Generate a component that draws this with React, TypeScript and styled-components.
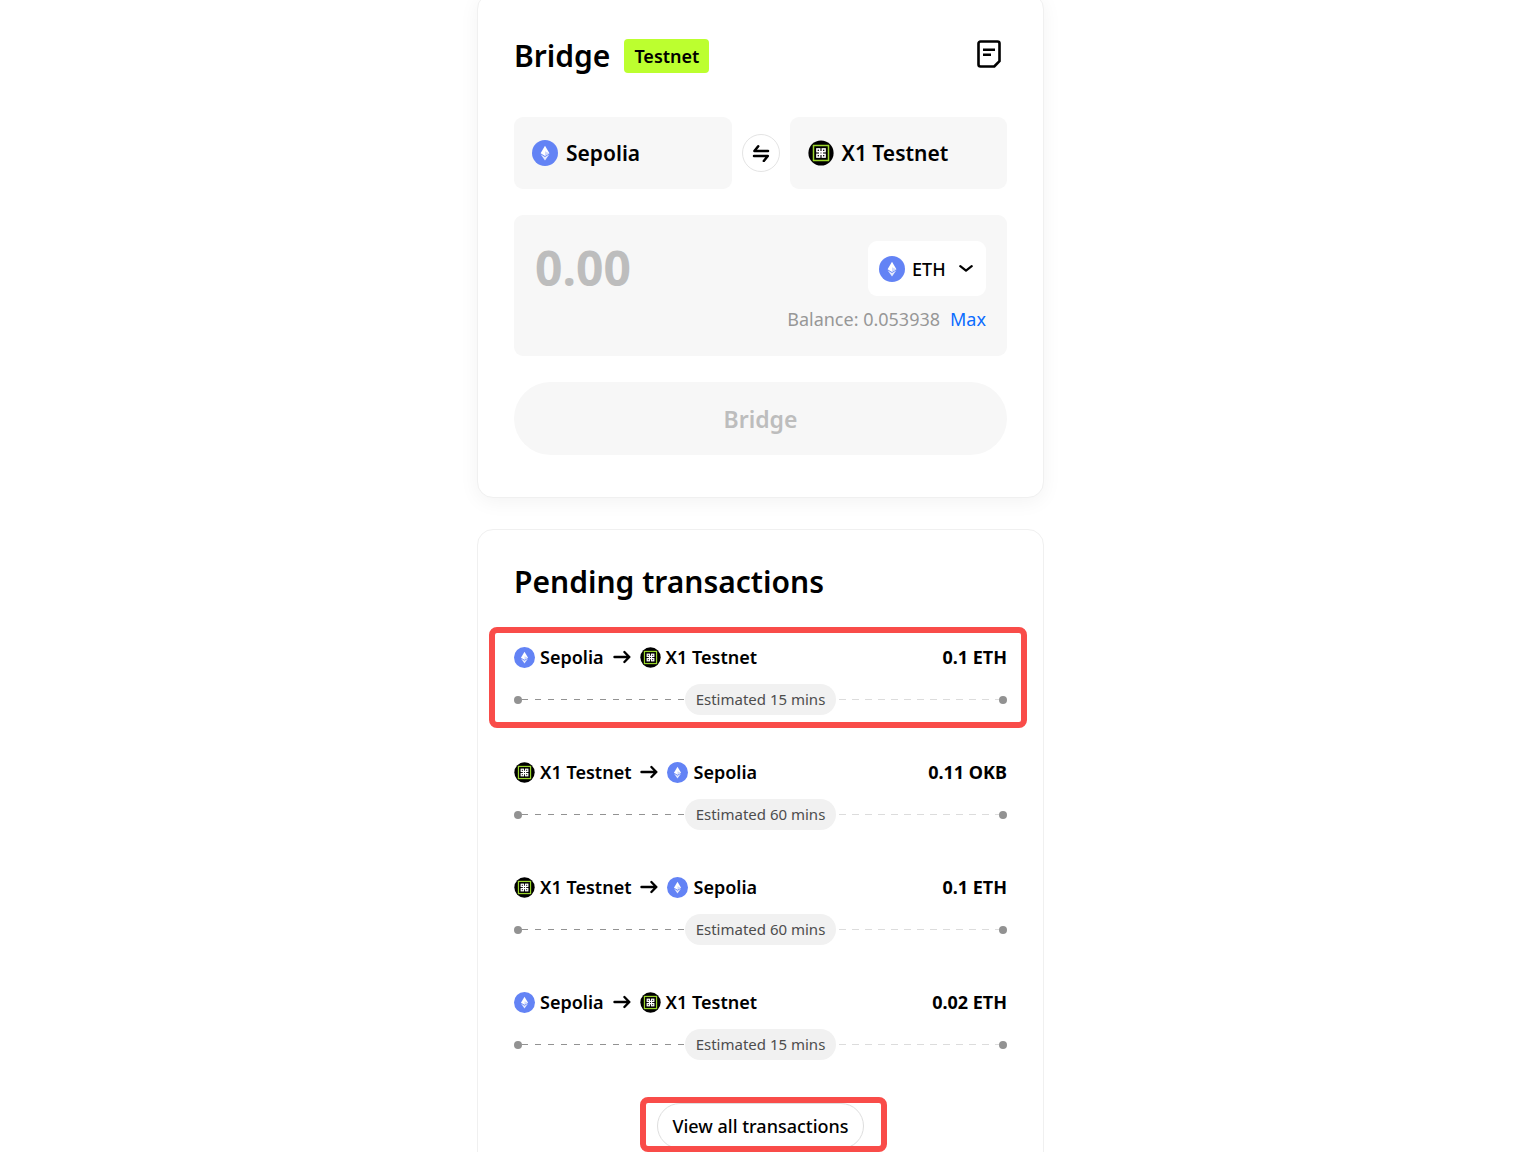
import React, { useState } from 'react';
import styled, { createGlobalStyle } from 'styled-components';

const GlobalStyle = createGlobalStyle`
  *, *::before, *::after { box-sizing: border-box; }
  html, body { margin: 0; background: #fff; }
  body { overflow: hidden; }
  body, button, input, select {
    font-family: "Noto Sans", "Open Sans", sans-serif;
    color: #000;
  }
  button { border: 0; padding: 0; background: none; cursor: pointer; }
  h1, h2, p, ul { margin: 0; padding: 0; }
`;

const Page = styled.main`
  height: 100vh;
  overflow: hidden;
  padding-right: 15px;
`;

const Column = styled.div`
  display: flex;
  flex-direction: column;
  gap: 31px;
  width: 100%;
  max-width: 567px;
  margin: -7px auto 0;
`;

const Card = styled.section<{ $raised?: boolean }>`
  padding: ${(p) => (p.$raised ? '36px 36px 42px' : '32px 36px 48px')};
  border: 1px solid #f0f0f0;
  border-radius: 16px;
  background: #fff;
  box-shadow: ${(p) => (p.$raised ? '0 4px 20px rgba(0, 0, 0, 0.05)' : 'none')};
`;

const Header = styled.header`
  display: flex;
  align-items: center;
  gap: 14px;
  height: 52px;
  margin-bottom: 35px;
`;

const Title = styled.h1`
  font-size: 30px;
  font-weight: 600;
  line-height: 40px;
`;

const Badge = styled.span`
  padding: 0 10px;
  border-radius: 4px;
  background: #bcff2f;
  font-size: 18px;
  font-weight: 600;
  line-height: 34px;
`;

const HistoryButton = styled.button`
  display: grid;
  place-items: center;
  align-self: flex-start;
  width: 36px;
  height: 48px;
  margin-left: auto;
`;

const Form = styled.form`
  display: flex;
  flex-direction: column;
  gap: 26px;
`;

const Route = styled.div`
  display: grid;
  grid-template-columns: 1fr 38px 1fr;
  align-items: center;
  gap: 10px;
`;

const ChainBox = styled.div`
  display: flex;
  align-items: center;
  gap: 8px;
  height: 72px;
  padding: 0 18px;
  border-radius: 9px;
  background: #f7f7f7;
  font-size: 21px;
  font-weight: 600;
`;

const SwapButton = styled.button`
  display: grid;
  place-items: center;
  width: 38px;
  height: 38px;
  border: 1px solid #e4e4e4;
  border-radius: 50%;
  background: #fff;
`;

const AmountPanel = styled.div`
  display: flex;
  flex-direction: column;
  gap: 11px;
  padding: 26px 21px 25px;
  border-radius: 9px;
  background: #f7f7f7;
`;

const AmountRow = styled.div`
  display: flex;
  align-items: flex-start;
  justify-content: space-between;
  gap: 16px;
`;

const AmountInput = styled.input`
  flex: 1;
  min-width: 0;
  height: 52px;
  padding: 0;
  border: 0;
  outline: 0;
  background: transparent;
  font-size: 48px;
  font-weight: 700;
  &::placeholder { color: #bdbdbd; opacity: 1; }
`;

const TokenPicker = styled.label`
  display: flex;
  align-items: center;
  gap: 7px;
  height: 55px;
  padding: 0 13px 0 11px;
  border-radius: 9px;
  background: #fff;
`;

const TokenSelect = styled.select`
  width: 40px;
  padding: 0;
  border: 0;
  outline: 0;
  appearance: none;
  background: transparent;
  font-size: 18px;
  font-weight: 500;
`;

const BalanceRow = styled.p`
  display: flex;
  justify-content: flex-end;
  gap: 10px;
  color: #979797;
  font-size: 18px;
  line-height: 24px;
`;

const MaxButton = styled.button`
  color: #0b6cff;
  font-size: 18px;
  line-height: 24px;
`;

const SubmitButton = styled.button`
  height: 73px;
  border-radius: 37px;
  background: #f7f7f7;
  color: #bdbdbd;
  font-size: 23px;
  font-weight: 600;
`;

const TransactionList = styled.ul`
  display: flex;
  flex-direction: column;
  gap: 43px;
  margin: 41px 0 43px;
  list-style: none;
`;

const Transaction = styled.li`
  position: relative;
  display: flex;
  flex-direction: column;
  gap: 13px;
`;

const Summary = styled.div`
  display: flex;
  align-items: center;
  gap: 9px;
  height: 28px;
  font-size: 18px;
  font-weight: 600;
`;

const Chain = styled.span`
  display: flex;
  align-items: center;
  gap: 5px;
`;

const Total = styled.span`
  margin-left: auto;
  font-weight: 700;
`;

const Progress = styled.div`
  display: flex;
  align-items: center;
`;

const Dot = styled.span`
  width: 8px;
  height: 8px;
  border-radius: 50%;
  background: #929292;
`;

const Dashes = styled.span<{ $done?: boolean }>`
  flex: 1;
  height: 1px;
  background: ${(p) =>
    p.$done
      ? 'repeating-linear-gradient(to right, #929292 0 6px, transparent 6px 13px)'
      : 'repeating-linear-gradient(to right, transparent 0 3px, #dcdcdc 3px 10px, transparent 10px 13px)'};
`;

const Estimate = styled.span`
  width: 151px;
  border-radius: 16px;
  background: #f1f1f1;
  color: #4d4d4d;
  font-size: 15px;
  line-height: 31px;
  text-align: center;
`;

const Footer = styled.div`
  position: relative;
  width: fit-content;
  margin: 0 auto;
`;

const ViewAllButton = styled.button`
  display: block;
  height: 46px;
  padding: 0 14px;
  border: 1px solid #dedede;
  border-radius: 23px;
  font-size: 18px;
  font-weight: 500;
`;

const Highlight = styled.span<{ $inset: string }>`
  position: absolute;
  inset: ${(p) => p.$inset};
  border: 6px solid #f94c49;
  border-radius: 8px;
  pointer-events: none;
`;

type Network = 'Sepolia' | 'X1 Testnet';

const EthIcon = ({ size }: { size: number }) => (
  <svg width={size} height={size} viewBox="0 0 26 26" aria-hidden="true">
    <circle cx="13" cy="13" r="13" fill="#6383f5" />
    <path d="M13 5.8 8.6 13.3 13 15.9l4.4-2.6z" fill="#fff" />
    <path d="M13 11.3v4.6l4.4-2.6z" fill="#cfd8fb" />
    <path d="m8.6 14.3 4.4 2.6 4.4-2.6L13 20.4z" fill="#e4e9fd" />
  </svg>
);

const X1Icon = ({ size }: { size: number }) => (
  <svg width={size} height={size} viewBox="0 0 26 26" aria-hidden="true">
    <circle cx="13" cy="13" r="12.6" fill="#000" />
    <rect x="5.5" y="5.5" width="15" height="15" fill="none" stroke="#9bd62b" strokeWidth="1.5" />
    <g fill="none" stroke="#fff" strokeWidth="1.5">
      <rect x="8.9" y="8.9" width="2.8" height="2.8" />
      <rect x="14.3" y="8.9" width="2.8" height="2.8" />
      <rect x="8.9" y="14.3" width="2.8" height="2.8" />
      <rect x="14.3" y="14.3" width="2.8" height="2.8" />
      <path d="M11 11.7h4M11 14.3h4M11.7 11v4M14.3 11v4" />
    </g>
  </svg>
);

const NetworkIcon = ({ network, size }: { network: Network; size: number }) =>
  network === 'Sepolia' ? <EthIcon size={size} /> : <X1Icon size={size} />;

const HistoryIcon = () => (
  <svg width="24" height="28" viewBox="0 0 24 28" fill="none" stroke="#000" strokeWidth="2.6" aria-hidden="true">
    <path d="M3.5 1.5h17a2 2 0 0 1 2 2v17.7L17.2 26.5H3.5a2 2 0 0 1-2-2v-21a2 2 0 0 1 2-2z" strokeLinejoin="round" />
    <path d="M6 9.7h12M6 14.7h8" strokeWidth="2.4" />
  </svg>
);

const SwapIcon = () => (
  <svg width="18" height="18" viewBox="0 0 18 18" fill="none" stroke="#000" strokeWidth="2.5" strokeLinecap="round" strokeLinejoin="round" aria-hidden="true">
    <path d="M16 7H2.4L6.2 2.2" />
    <path d="M2 12h13.8L11.8 17" />
  </svg>
);

const ChevronIcon = () => (
  <svg width="14" height="9" viewBox="0 0 14 9" fill="none" stroke="#000" strokeWidth="2.2" strokeLinecap="round" strokeLinejoin="round" aria-hidden="true">
    <path d="M1.3 2.2 7 6.6l5.7-4.4" />
  </svg>
);

const ArrowIcon = () => (
  <svg width="18" height="14" viewBox="0 0 18 14" fill="none" stroke="#000" strokeWidth="2.4" strokeLinecap="round" strokeLinejoin="round" aria-hidden="true">
    <path d="M1.5 7h14.8M11.4 2l4.9 5-4.9 5" />
  </svg>
);

interface Transfer {
  id: number;
  from: Network;
  to: Network;
  total: string;
  minutes: number;
}

const transfers: Transfer[] = [
  { id: 1, from: 'Sepolia', to: 'X1 Testnet', total: '0.1 ETH', minutes: 15 },
  { id: 2, from: 'X1 Testnet', to: 'Sepolia', total: '0.11 OKB', minutes: 60 },
  { id: 3, from: 'X1 Testnet', to: 'Sepolia', total: '0.1 ETH', minutes: 60 },
  { id: 4, from: 'Sepolia', to: 'X1 Testnet', total: '0.02 ETH', minutes: 15 },
];

export default function App() {
  const [amount, setAmount] = useState('');

  return (
    <>
      <GlobalStyle />
      <Page>
        <Column>
          <Card $raised>
            <Header>
              <Title>Bridge</Title>
              <Badge>Testnet</Badge>
              <HistoryButton type="button" aria-label="History">
                <HistoryIcon />
              </HistoryButton>
            </Header>
            <Form onSubmit={(e) => e.preventDefault()}>
              <Route>
                <ChainBox>
                  <EthIcon size={26} />
                  Sepolia
                </ChainBox>
                <SwapButton type="button" aria-label="Swap networks">
                  <SwapIcon />
                </SwapButton>
                <ChainBox>
                  <X1Icon size={26} />
                  X1 Testnet
                </ChainBox>
              </Route>
              <AmountPanel>
                <AmountRow>
                  <AmountInput
                    aria-label="Amount"
                    inputMode="decimal"
                    placeholder="0.00"
                    value={amount}
                    onChange={(e) => setAmount(e.target.value)}
                  />
                  <TokenPicker>
                    <EthIcon size={26} />
                    <TokenSelect aria-label="Token" defaultValue="ETH">
                      <option>ETH</option>
                    </TokenSelect>
                    <ChevronIcon />
                  </TokenPicker>
                </AmountRow>
                <BalanceRow>
                  Balance: 0.053938
                  <MaxButton type="button" onClick={() => setAmount('0.053938')}>
                    Max
                  </MaxButton>
                </BalanceRow>
              </AmountPanel>
              <SubmitButton type="submit">Bridge</SubmitButton>
            </Form>
          </Card>

          <Card>
            <Title as="h2">Pending transactions</Title>
            <TransactionList>
              {transfers.map((t, index) => (
                <Transaction key={t.id}>
                  <Summary>
                    <Chain>
                      <NetworkIcon network={t.from} size={21} />
                      {t.from}
                    </Chain>
                    <ArrowIcon />
                    <Chain>
                      <NetworkIcon network={t.to} size={21} />
                      {t.to}
                    </Chain>
                    <Total>{t.total}</Total>
                  </Summary>
                  <Progress>
                    <Dot />
                    <Dashes $done />
                    <Estimate>Estimated {t.minutes} mins</Estimate>
                    <Dashes />
                    <Dot />
                  </Progress>
                  {index === 0 && <Highlight $inset="-16px -20px -13px -25px" />}
                </Transaction>
              ))}
            </TransactionList>
            <Footer>
              <ViewAllButton type="button">View all transactions</ViewAllButton>
              <Highlight $inset="-6px -23px -3px -17px" />
            </Footer>
          </Card>
        </Column>
      </Page>
    </>
  );
}
